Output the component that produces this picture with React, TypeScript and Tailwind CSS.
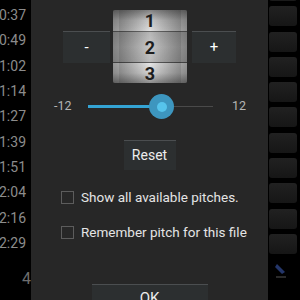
import React from "react";

const times = ["0:37", "0:49", "1:02", "1:14", "1:27", "1:39", "1:51", "2:04", "2:16", "2:29"];

function Background() {
  return (
    <div className="flex h-[300px] w-[300px] bg-black">
      {/* left time column */}
      <div className="w-[31px] overflow-hidden pt-[3px]">
        {times.map((t) => (
          <div
            key={t}
            className="flex h-[25.3px] items-center justify-end whitespace-nowrap pr-[5px] text-[14px] text-[#8c8c8c]"
          >
            {t}
          </div>
        ))}
        <div className="mt-[8px] flex h-[30px] items-center justify-end pr-0 text-[16px] text-[#6e6e6e]">4</div>
      </div>
      <div className="flex-1" />
      {/* right button column */}
      <div className="flex w-[32px] flex-col gap-[5.3px] pl-[1px] pt-[6px]">
        <div className="-mt-[11px] h-[6px] w-[28px] rounded-b-[3px] bg-[#1a1a1a]" />
        {times.map((t) => (
          <div key={t} className="h-[20px] w-[28px] rounded-[3px] bg-gradient-to-b from-[#212121] to-[#161616]" />
        ))}
        <div className="ml-[4px] mt-[3px]">
          <svg width="16" height="18" viewBox="0 0 16 18">
            <path d="M4 2 L12 10 L9 12 L2 5 Z" fill="#24366a" />
            <path d="M3 15 L13 15" stroke="#2a2a2a" strokeWidth="2" />
          </svg>
        </div>
      </div>
    </div>
  );
}

function PickerButton({ label }: { label: string }) {
  return (
    <div className="flex h-[32px] items-center justify-center border-t border-[#4b4e50] bg-[#2c2f30] text-[15px] text-white">
      {label}
    </div>
  );
}

function NumberPicker() {
  return (
    <div className="relative h-[73px] w-[74px] overflow-hidden rounded-[2px] text-[18px] font-bold text-[#1e1e1e]">
      <div className="flex h-[21px] items-center justify-center bg-gradient-to-b from-[#828282] via-[#c8c8c8] to-[#dedede]">1</div>
      <div className="h-[1px] bg-[#6a6a6a]" />
      <div className="flex h-[30px] items-center justify-center bg-gradient-to-b from-[#b6b6b6] via-[#c8c8c8] to-[#bababa]">2</div>
      <div className="h-[1px] bg-[#5e5e5e]" />
      <div className="flex h-[20px] items-center justify-center bg-gradient-to-b from-[#e6e6e6] via-[#d2d2d2] to-[#8e8e8e]">3</div>
      <div className="pointer-events-none absolute inset-0 bg-gradient-to-r from-black/35 via-transparent to-black/35" />
      <div className="pointer-events-none absolute inset-y-0 left-[6px] right-[6px] bg-gradient-to-r from-black/10 via-transparent to-black/10" />
    </div>
  );
}

function Checkbox({ label }: { label: string }) {
  return (
    <div className="flex h-[35px] items-center gap-[7px] pl-[30px]">
      <div className="h-[13px] w-[13px] border border-[#5c5c5c]" />
      <span className="whitespace-nowrap text-[13.5px] text-[#e4e4e4]">{label}</span>
    </div>
  );
}

function Dialog() {
  return (
    <div className="absolute left-[31px] top-0 flex h-[300px] w-[237px] flex-col bg-[#272727]">
      {/* picker row */}
      <div className="flex items-center pl-[32px] pt-[10px]">
        <div className="w-[47px]">
          <PickerButton label="-" />
        </div>
        <div className="ml-[3px]">
          <NumberPicker />
        </div>
        <div className="ml-[5px] w-[44px]">
          <PickerButton label="+" />
        </div>
      </div>

      {/* slider row */}
      <div className="mt-[11px] flex h-[24px] items-center pl-[23px] text-[12.5px] text-[#b4b4b4]">
        <span className="w-[17px]">-12</span>
        <div className="relative ml-[17px] h-[24px] w-[125px]">
          <div className="absolute left-0 right-0 top-[12px] h-[1px] bg-[#4a4a4a]" />
          <div className="absolute left-0 top-[11px] h-[3px] w-[73px] bg-[#34a4d4]" />
          <div className="absolute left-[61px] top-0 flex h-[25px] w-[25px] items-center justify-center rounded-full bg-[#3d96bf]">
            <div className="h-[10px] w-[10px] rounded-full bg-[#56c4ec]" />
          </div>
        </div>
        <span className="ml-[19px]">12</span>
      </div>

      {/* reset */}
      <div className="mt-[22px] flex justify-center">
        <div className="flex h-[30px] w-[52px] items-center justify-center border-t border-[#4b4e50] bg-[#2c2f30] text-[14px] text-[#ececec]">
          Reset
        </div>
      </div>

      {/* checkboxes */}
      <div className="mt-[10px]">
        <Checkbox label="Show all available pitches." />
        <Checkbox label="Remember pitch for this file" />
      </div>

      <div className="flex-1" />

      {/* OK */}
      <div className="flex justify-center">
        <div className="flex h-[16px] w-[116px] items-start justify-center overflow-hidden border-t border-[#4b4e50] bg-[#2c2f30] pt-[6px] text-[15px] leading-[15px] text-[#ececec]">
          OK
        </div>
      </div>
    </div>
  );
}

export default function App() {
  return (
    <div className="relative h-[300px] w-[300px] overflow-hidden" style={{ fontFamily: "Roboto, 'Noto Sans', sans-serif" }}>
      <Background />
      <Dialog />
    </div>
  );
}
